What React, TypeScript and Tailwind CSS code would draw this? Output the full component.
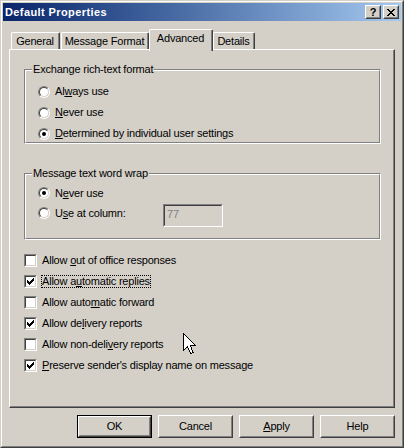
import React from "react";

function Radio({ checked }: { checked?: boolean }) {
  return (
    <span className="block w-[12px] h-[12px] shrink-0 rounded-full border border-t-[#808080] border-l-[#808080] border-r-white border-b-white">
      <span className="flex w-full h-full items-center justify-center rounded-full border border-t-[#404040] border-l-[#404040] border-r-[#d4d0c8] border-b-[#d4d0c8] bg-white">
        {checked && <span className="block w-[4px] h-[4px] rounded-full bg-black" />}
      </span>
    </span>
  );
}

function CheckMark() {
  return (
    <svg width="7" height="7" viewBox="0 0 7 7" shapeRendering="crispEdges">
      <rect x="6" y="0" width="1" height="1" fill="#000" />
      <rect x="5" y="1" width="2" height="1" fill="#000" />
      <rect x="0" y="2" width="1" height="1" fill="#000" />
      <rect x="4" y="2" width="3" height="1" fill="#000" />
      <rect x="0" y="3" width="2" height="1" fill="#000" />
      <rect x="3" y="3" width="3" height="1" fill="#000" />
      <rect x="0" y="4" width="5" height="1" fill="#000" />
      <rect x="1" y="5" width="3" height="1" fill="#000" />
      <rect x="2" y="6" width="1" height="1" fill="#000" />
    </svg>
  );
}

function Checkbox({ checked }: { checked?: boolean }) {
  return (
    <span className="block w-[13px] h-[13px] shrink-0 border border-t-[#808080] border-l-[#808080] border-r-white border-b-white">
      <span className="flex w-full h-full items-center justify-center border border-t-[#404040] border-l-[#404040] border-r-[#d4d0c8] border-b-[#d4d0c8] bg-white">
        {checked && <CheckMark />}
      </span>
    </span>
  );
}

function CloseGlyph() {
  return (
    <svg width="8" height="7" viewBox="0 0 8 7" shapeRendering="crispEdges">
      <rect x="0" y="0" width="2" height="1" fill="#000" />
      <rect x="6" y="0" width="2" height="1" fill="#000" />
      <rect x="1" y="1" width="2" height="1" fill="#000" />
      <rect x="5" y="1" width="2" height="1" fill="#000" />
      <rect x="2" y="2" width="4" height="1" fill="#000" />
      <rect x="3" y="3" width="2" height="1" fill="#000" />
      <rect x="2" y="4" width="4" height="1" fill="#000" />
      <rect x="1" y="5" width="2" height="1" fill="#000" />
      <rect x="5" y="5" width="2" height="1" fill="#000" />
      <rect x="0" y="6" width="2" height="1" fill="#000" />
      <rect x="6" y="6" width="2" height="1" fill="#000" />
    </svg>
  );
}

function TitleButton({ children }: { children: React.ReactNode }) {
  return (
    <div className="w-[16px] h-[14px] border border-t-white border-l-white border-r-[#404040] border-b-[#404040] bg-[#d4d0c8]">
      <div className="flex w-full h-full items-center justify-center border border-t-[#d4d0c8] border-l-[#d4d0c8] border-r-[#808080] border-b-[#808080]">
        {children}
      </div>
    </div>
  );
}

function Button({ children, isDefault }: { children: React.ReactNode; isDefault?: boolean }) {
  const inner = (
    <div className="w-full h-full border border-t-white border-l-white border-r-[#404040] border-b-[#404040]">
      <div className="flex w-full h-full items-center justify-center border border-t-[#d4d0c8] border-l-[#d4d0c8] border-r-[#808080] border-b-[#808080]">
        {children}
      </div>
    </div>
  );
  if (isDefault) {
    return <div className="w-[75px] h-[23px] border border-black">{inner}</div>;
  }
  return <div className="w-[75px] h-[23px]">{inner}</div>;
}

function GroupBox({ label, className, children }: { label: string; className: string; children: React.ReactNode }) {
  return (
    <div className={"relative w-[357px] ml-[14px] border border-t-[#808080] border-l-[#808080] border-r-white border-b-white " + className}>
      <div className="w-full h-full border border-t-white border-l-white border-r-[#808080] border-b-[#808080]">
        {children}
      </div>
      <span className="absolute left-[7px] top-[-7px] px-[1px] bg-[#d4d0c8] leading-[13px]">{label}</span>
    </div>
  );
}

function RadioRow({ checked, children, h }: { checked?: boolean; children: React.ReactNode; h: string }) {
  return (
    <div className={"flex items-center pl-[12px] " + h}>
      <Radio checked={checked} />
      <span className="ml-[5px] leading-[13px]">{children}</span>
    </div>
  );
}

function CheckRow({ checked, focused, children }: { checked?: boolean; focused?: boolean; children: React.ReactNode }) {
  return (
    <div className="flex items-center h-[21px]">
      <Checkbox checked={checked} />
      <span
        className={
          "ml-[4px] leading-[11px] border " +
          (focused ? "border-dotted border-black" : "border-transparent")
        }
      >
        {children}
      </span>
    </div>
  );
}

function Tab({ label, selected, w }: { label: string; selected?: boolean; w: string }) {
  if (selected) {
    return (
      <div className={"relative z-10 h-[22px] -mb-[2px] bg-[#d4d0c8] rounded-t-[2px] border-t border-l border-r border-t-white border-l-white border-r-[#404040] " + w}>
        <div className="flex h-full justify-center pt-[2px] border-r border-r-[#808080] leading-[13px]">{label}</div>
      </div>
    );
  }
  return (
    <div className={"h-[17px] rounded-t-[2px] border-t border-l border-r border-t-white border-l-white border-r-[#404040] " + w}>
      <div className="flex h-full justify-center pt-[2px] border-r border-r-[#808080] leading-[13px]">{label}</div>
    </div>
  );
}

export default function App() {
  return (
    <div className="relative w-[404px] h-[448px] bg-[#d4d0c8] border border-t-[#d4d0c8] border-l-[#d4d0c8] border-r-[#404040] border-b-[#404040] text-[11px] text-black tracking-[-0.2px] font-['Liberation_Sans',Arial,sans-serif] select-none overflow-hidden">
      <div className="flex flex-col h-full border border-t-white border-l-white border-r-[#808080] border-b-[#808080] p-px">
        {/* Title bar */}
        <div className="flex items-center h-[18px] shrink-0 pl-[2px] pr-[2px] bg-linear-to-r from-[#0a246a] to-[#a6caf0]">
          <span className="font-bold text-white tracking-[0.4px] leading-[13px]">Default Properties</span>
          <div className="ml-auto flex gap-[2px]">
            <TitleButton>
              <span className="font-bold text-[11px] leading-[10px] tracking-normal">?</span>
            </TitleButton>
            <TitleButton>
              <CloseGlyph />
            </TitleButton>
          </div>
        </div>

        <div className="flex flex-col px-[6px]">
          {/* Tabs */}
          <div className="flex items-end h-[20px] mt-[8px] pl-[2px]">
            <div className="mr-[1px]">
              <Tab label="General" w="w-[49px]" />
            </div>
            <Tab label="Message Format" w="w-[88px]" />
            <Tab label="Advanced" selected w="w-[64px]" />
            <Tab label="Details" w="w-[42px]" />
          </div>

          {/* Panel */}
          <div className="w-[386px] h-[359px] border border-t-white border-l-white border-r-[#404040] border-b-[#404040]">
            <div className="flex flex-col h-full border-r border-b border-r-[#808080] border-b-[#808080]">
              <GroupBox label="Exchange rich-text format" className="mt-[19px] h-[75px]">
                <div className="flex flex-col pt-[10px]">
                  <RadioRow h="h-[21px]">
                    Al<u>w</u>ays use
                  </RadioRow>
                  <RadioRow h="h-[21px]">
                    <u>N</u>ever use
                  </RadioRow>
                  <RadioRow h="h-[21px]" checked>
                    <u>D</u>etermined by individual user settings
                  </RadioRow>
                </div>
              </GroupBox>

              <GroupBox label="Message text word wrap" className="mt-[29px] h-[67px]">
                <div className="flex flex-col pt-[8px]">
                  <RadioRow h="h-[20px]" checked>
                    N<u>e</u>ver use
                  </RadioRow>
                  <div className="flex items-center h-[20px] pl-[12px]">
                    <Radio />
                    <span className="ml-[5px] w-[108px] leading-[13px]">
                      U<u>s</u>e at column:
                    </span>
                    <div className="self-start mt-[1px] w-[60px] h-[23px] border border-t-[#808080] border-l-[#808080] border-r-white border-b-white">
                      <div className="w-full h-full pl-[2px] pt-[2px] border border-t-[#404040] border-l-[#404040] border-r-[#d4d0c8] border-b-[#d4d0c8] text-[#808080] leading-[13px]">
                        77
                      </div>
                    </div>
                  </div>
                </div>
              </GroupBox>

              <div className="flex flex-col mt-[10px] ml-[14px]">
                <CheckRow>
                  Allow <u>o</u>ut of office responses
                </CheckRow>
                <CheckRow checked focused>
                  Allow a<u>u</u>tomatic replies
                </CheckRow>
                <CheckRow>
                  Allow auto<u>m</u>atic forward
                </CheckRow>
                <CheckRow checked>
                  Allow de<u>l</u>ivery reports
                </CheckRow>
                <CheckRow>
                  Allow non-deli<u>v</u>ery reports
                </CheckRow>
                <CheckRow checked>
                  <u>P</u>reserve sender's display name on message
                </CheckRow>
              </div>
            </div>
          </div>

          {/* Buttons */}
          <div className="flex justify-end gap-[6px] mt-[7px]">
            <Button isDefault>OK</Button>
            <Button>Cancel</Button>
            <Button>
              <span>
                <u>A</u>pply
              </span>
            </Button>
            <Button>Help</Button>
          </div>
        </div>
      </div>

      {/* Mouse pointer */}
      <svg
        className="absolute left-[182px] top-[332px]"
        width="14"
        height="23"
        viewBox="0 0 14 23"
        shapeRendering="crispEdges"
      >
        <path
          d="M0.5 0.5 L0.5 17.5 L4.5 13.5 L7.5 20.5 L10 19.5 L7.5 12.5 L12.5 12.5 Z"
          fill="#fff"
          stroke="#000"
          strokeWidth="1"
          strokeLinejoin="miter"
        />
      </svg>
    </div>
  );
}
